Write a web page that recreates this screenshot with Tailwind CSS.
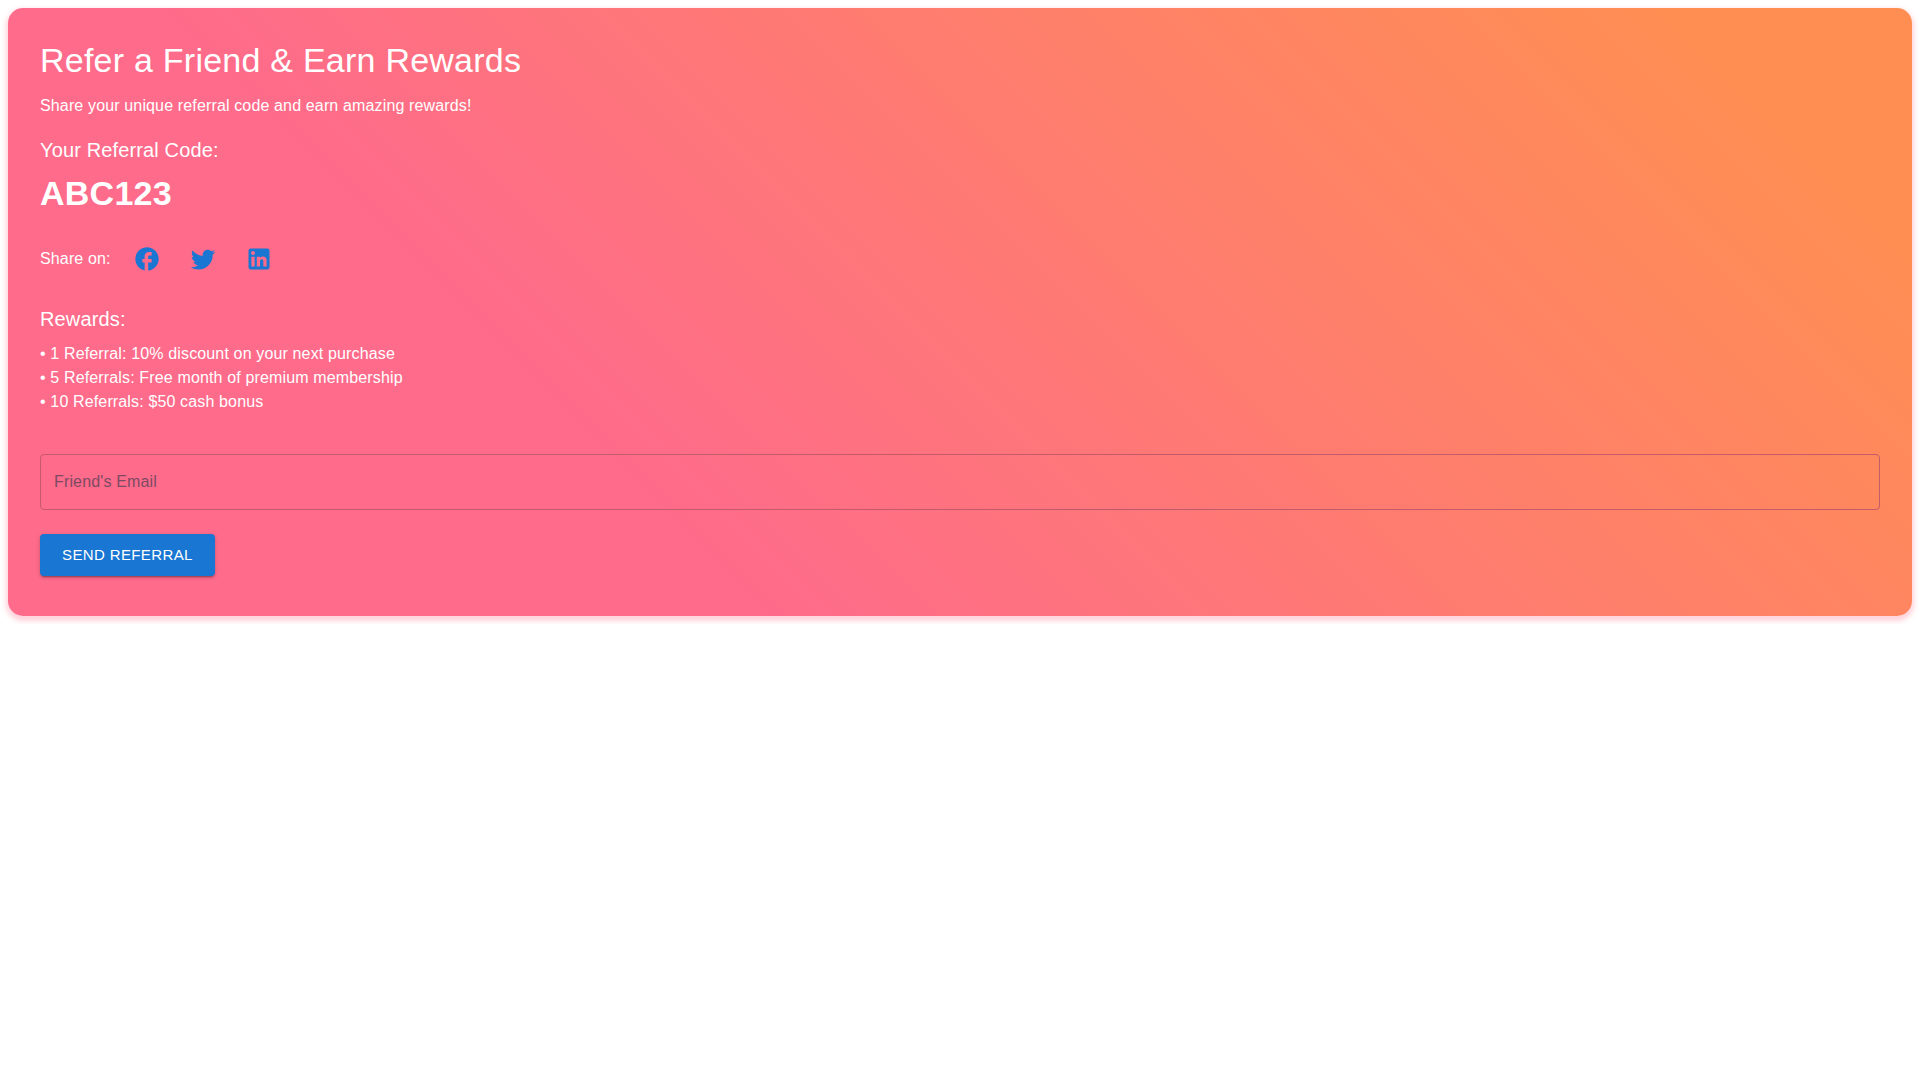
<!DOCTYPE html>
<html lang="en">
<head>
  <meta charset="UTF-8">
  <meta name="viewport" content="width=device-width, initial-scale=1.0">
  <title>Refer a Friend</title>
  <script src="https://cdn.jsdelivr.net/npm/@tailwindcss/browser@4"></script>
</head>
<body class="bg-white p-2 font-['Liberation_Sans',Arial,sans-serif]">
  <main class="rounded-[15px] bg-[linear-gradient(45deg,#fe6b8b_30%,#ff8e53_90%)] px-8 pt-8 pb-10 text-white shadow-[0_3px_5px_2px_rgba(255,105,135,0.3)]">
    <h1 class="mb-3.5 text-[34px] leading-10 tracking-[0.007em]">Refer a Friend &amp; Earn Rewards</h1>
    <p class="mb-4 text-base tracking-[0.009em]">Share your unique referral code and earn amazing rewards!</p>

    <!-- Referral code -->
    <h2 class="mb-[7px] text-xl leading-8 tracking-[0.007em]">Your Referral Code:</h2>
    <p class="text-[34px] leading-10 font-bold tracking-[0.007em]">ABC123</p>

    <!-- Share links -->
    <div class="mt-[26px] flex items-center gap-4">
      <p class="text-base tracking-[0.009em]">Share on:</p>
      <button type="button" aria-label="Share on Facebook" class="rounded-full p-1.5 text-[#1976d2]">
        <svg class="size-7" viewBox="0 0 24 24" fill="currentColor" aria-hidden="true"><path d="M22 12c0-5.52-4.48-10-10-10S2 6.48 2 12c0 4.84 3.44 8.87 8 9.8V15H8v-3h2V9.5C10 7.57 11.57 6 13.5 6H16v3h-2c-.55 0-1 .45-1 1v2h3v3h-3v6.95c5.05-.5 9-4.76 9-9.95z"/></svg>
      </button>
      <button type="button" aria-label="Share on Twitter" class="rounded-full p-1.5 text-[#1976d2]">
        <svg class="size-7" viewBox="0 0 24 24" fill="currentColor" aria-hidden="true"><path d="M22.46 6c-.77.35-1.6.58-2.46.69.88-.53 1.56-1.37 1.88-2.38-.83.5-1.75.85-2.72 1.05C18.37 4.5 17.26 4 16 4c-2.35 0-4.27 1.92-4.27 4.29 0 .34.04.67.11.98C8.28 9.09 5.11 7.38 3 4.79c-.37.63-.58 1.37-.58 2.15 0 1.49.75 2.81 1.91 3.56-.71 0-1.37-.2-1.95-.5v.03c0 2.08 1.48 3.82 3.44 4.21a4.22 4.22 0 0 1-1.93.07 4.28 4.28 0 0 0 4 2.98 8.521 8.521 0 0 1-5.33 1.84c-.34 0-.68-.02-1.02-.06C3.44 20.29 5.7 21 8.12 21 16 21 20.33 14.46 20.33 8.79c0-.19 0-.37-.01-.56.84-.6 1.56-1.36 2.14-2.23z"/></svg>
      </button>
      <button type="button" aria-label="Share on LinkedIn" class="rounded-full p-1.5 text-[#1976d2]">
        <svg class="size-7" viewBox="0 0 24 24" fill="currentColor" aria-hidden="true"><path d="M19 3a2 2 0 0 1 2 2v14a2 2 0 0 1-2 2H5a2 2 0 0 1-2-2V5a2 2 0 0 1 2-2h14m-.5 15.5v-5.3a3.26 3.26 0 0 0-3.26-3.26c-.85 0-1.84.52-2.32 1.3v-1.11h-2.79v8.37h2.79v-4.93c0-.77.62-1.4 1.39-1.4a1.4 1.4 0 0 1 1.4 1.4v4.93h2.79M6.88 8.56a1.68 1.68 0 0 0 1.68-1.68c0-.93-.75-1.69-1.68-1.69a1.69 1.69 0 0 0-1.69 1.69c0 .93.76 1.68 1.69 1.68m1.39 9.94v-8.37H5.5v8.37h2.77z"/></svg>
      </button>
    </div>

    <!-- Rewards -->
    <h2 class="mt-6 mb-[7px] text-xl leading-8 tracking-[0.007em]">Rewards:</h2>
    <ul class="text-base tracking-[0.009em]">
      <li>• 1 Referral: 10% discount on your next purchase</li>
      <li>• 5 Referrals: Free month of premium membership</li>
      <li>• 10 Referrals: $50 cash bonus</li>
    </ul>

    <!-- Referral form -->
    <form class="mt-10">
      <input type="email" name="email" aria-label="Friend's Email" placeholder="Friend's Email"
             class="block h-14 w-full rounded border border-[#c45a6a] px-[13px] text-base tracking-[0.009em] text-black/87 placeholder:text-[#7d4a63]">
      <button type="submit"
              class="mt-6 block rounded bg-[#1976d2] px-[22px] py-2 text-[15px] leading-[26px] font-medium tracking-wide uppercase shadow-[0_3px_1px_-2px_rgba(0,0,0,0.2),0_2px_2px_0_rgba(0,0,0,0.14),0_1px_5px_0_rgba(0,0,0,0.12)] hover:bg-[#1565c0]">
        Send Referral
      </button>
    </form>
  </main>
</body>
</html>
